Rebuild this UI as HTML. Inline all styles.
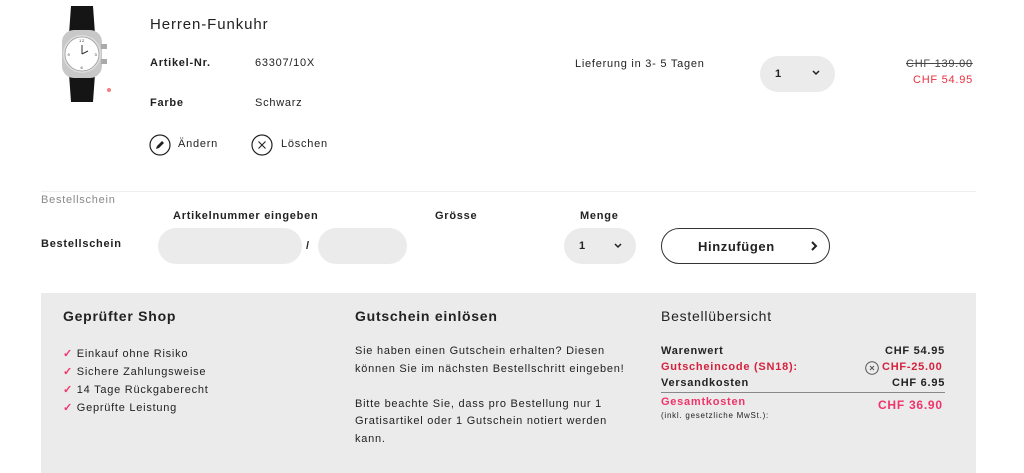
<!DOCTYPE html>
<html><head><meta charset="utf-8"><style>
*{margin:0;padding:0;box-sizing:border-box}
body{width:1024px;height:473px;background:#fff;font-family:"Liberation Sans",sans-serif;color:#222;position:relative;overflow:hidden;font-size:11px;letter-spacing:.75px}
.a{position:absolute;white-space:nowrap}
.b{font-weight:bold}
.pill{position:absolute;background:#ebebeb;border-radius:20px}
.red{color:#d4213d}
.pink{color:#f0336a}
</style></head><body>
<!-- watch -->
<svg class="a" style="left:52px;top:4px" width="64" height="100" viewBox="0 0 64 100">
<path d="M19 2h22l2 28H17z" fill="#151515"/>
<path d="M17 70h26l-2 28H19z" fill="#151515"/>
<rect x="10" y="26" width="40" height="48" rx="12" fill="#c8c8c8"/>
<rect x="49" y="40" width="6" height="5" fill="#aaa"/><rect x="49" y="55" width="6" height="5" fill="#aaa"/>
<circle cx="30" cy="50" r="19" fill="#ddd"/>
<circle cx="30" cy="50" r="17" fill="#fff" stroke="#999" stroke-width=".8"/>
<g font-size="4" fill="#333" text-anchor="middle" font-family="Liberation Sans"><text x="30" y="38">12</text><text x="44" y="52">3</text><text x="30" y="65">6</text><text x="17" y="52">9</text></g>
<line x1="30" y1="50" x2="30" y2="41" stroke="#333"/><line x1="30" y1="50" x2="36" y2="47" stroke="#333"/>
<circle cx="57" cy="86" r="2" fill="#f08080"/>
</svg>
<div class="a" style="left:150px;top:16px;font-size:15px;letter-spacing:.9px">Herren-Funkuhr</div>
<div class="a b" style="left:150px;top:57px">Artikel-Nr.</div>
<div class="a" style="left:255px;top:57px">63307/10X</div>
<div class="a b" style="left:150px;top:97px">Farbe</div>
<div class="a" style="left:255px;top:97px">Schwarz</div>
<svg class="a" style="left:149px;top:134px" width="22" height="22"><circle cx="11" cy="11" r="10" fill="none" stroke="#222" stroke-width="1.2"/><path d="M7 15l1-3 5-5 2 2-5 5z" fill="#222"/></svg>
<div class="a" style="left:178px;top:138px">Ändern</div>
<svg class="a" style="left:251px;top:134px" width="22" height="22"><circle cx="11" cy="11" r="10" fill="none" stroke="#222" stroke-width="1.2"/><path d="M7.5 7.5l7 7M14.5 7.5l-7 7" stroke="#222" stroke-width="1.1"/></svg>
<div class="a" style="left:281px;top:138px">Löschen</div>
<div class="a" style="left:575px;top:58px">Lieferung in 3- 5 Tagen</div>
<div class="pill" style="left:760px;top:56px;width:75px;height:36px"></div>
<div class="a b" style="left:775px;top:68px">1</div>
<svg class="a" style="left:812px;top:70px" width="8" height="6"><path d="M1 1l3 3 3-3" fill="none" stroke="#222" stroke-width="1.5"/></svg>
<div class="a" style="left:906px;top:58px;text-decoration:line-through;color:#444">CHF 139.00</div>
<div class="a" style="left:913px;top:74px;color:#e8303f">CHF 54.95</div>
<div class="a" style="left:41px;top:191px;width:935px;height:1px;background:#eee"></div>
<div class="a" style="left:41px;top:194px;color:#888">Bestellschein</div>
<div class="a b" style="left:173px;top:210px">Artikelnummer eingeben</div>
<div class="a b" style="left:435px;top:210px">Grösse</div>
<div class="a b" style="left:580px;top:210px">Menge</div>
<div class="a b" style="left:41px;top:238px">Bestellschein</div>
<div class="pill" style="left:158px;top:228px;width:144px;height:36px"></div>
<div class="a b" style="left:306px;top:240px">/</div>
<div class="pill" style="left:318px;top:228px;width:89px;height:36px"></div>
<div class="pill" style="left:564px;top:228px;width:72px;height:36px"></div>
<div class="a b" style="left:579px;top:240px">1</div>
<svg class="a" style="left:614px;top:243px" width="8" height="6"><path d="M1 1l3 3 3-3" fill="none" stroke="#222" stroke-width="1.5"/></svg>
<div class="a" style="left:661px;top:228px;width:169px;height:36px;border:1px solid #333;border-radius:18px"></div>
<div class="a b" style="left:698px;top:239px;font-size:13px;letter-spacing:.6px">Hinzufügen</div>
<svg class="a" style="left:810px;top:241px" width="8" height="10"><path d="M2 1l4 4-4 4" fill="none" stroke="#222" stroke-width="2"/></svg>
<div class="a" style="left:41px;top:293px;width:935px;height:180px;background:#ebebeb"></div>
<div class="a b" style="left:63px;top:308px;font-size:14px">Geprüfter Shop</div>
<div class="a" style="left:63px;top:345px;line-height:18px;white-space:normal;width:220px">
<div><span class="pink" style="font-weight:bold">✓</span> Einkauf ohne Risiko</div>
<div><span class="pink" style="font-weight:bold">✓</span> Sichere Zahlungsweise</div>
<div><span class="pink" style="font-weight:bold">✓</span> 14 Tage Rückgaberecht</div>
<div><span class="pink" style="font-weight:bold">✓</span> Geprüfte Leistung</div>
</div>
<div class="a b" style="left:355px;top:308px;font-size:14px">Gutschein einlösen</div>
<div class="a" style="left:355px;top:343px;line-height:17.5px;white-space:normal;width:275px">Sie haben einen Gutschein erhalten? Diesen können Sie im nächsten Bestellschritt eingeben!<br><br>Bitte beachte Sie, dass pro Bestellung nur 1 Gratisartikel oder 1 Gutschein notiert werden kann.</div>
<div class="a" style="left:661px;top:308px;font-size:14px">Bestellübersicht</div>
<div class="a b" style="left:661px;top:345px">Warenwert</div>
<div class="a b" style="left:885px;top:345px">CHF 54.95</div>
<div class="a b red" style="left:661px;top:361px">Gutscheincode (SN18):</div>
<svg class="a" style="left:865px;top:361px" width="14" height="14"><circle cx="7" cy="7" r="6.3" fill="none" stroke="#555"/><path d="M5 5l4 4M9 5l-4 4" stroke="#555"/></svg>
<div class="a b red" style="left:882px;top:361px">CHF-25.00</div>
<div class="a b" style="left:661px;top:377px">Versandkosten</div>
<div class="a b" style="left:892px;top:377px">CHF 6.95</div>
<div class="a" style="left:661px;top:392px;width:284px;height:1px;background:#888"></div>
<div class="a b pink" style="left:661px;top:396px">Gesamtkosten</div>
<div class="a b pink" style="left:878px;top:398px;font-size:12px">CHF 36.90</div>
<div class="a" style="left:661px;top:411px;font-size:8px">(inkl. gesetzliche MwSt.):</div>
</body></html>
